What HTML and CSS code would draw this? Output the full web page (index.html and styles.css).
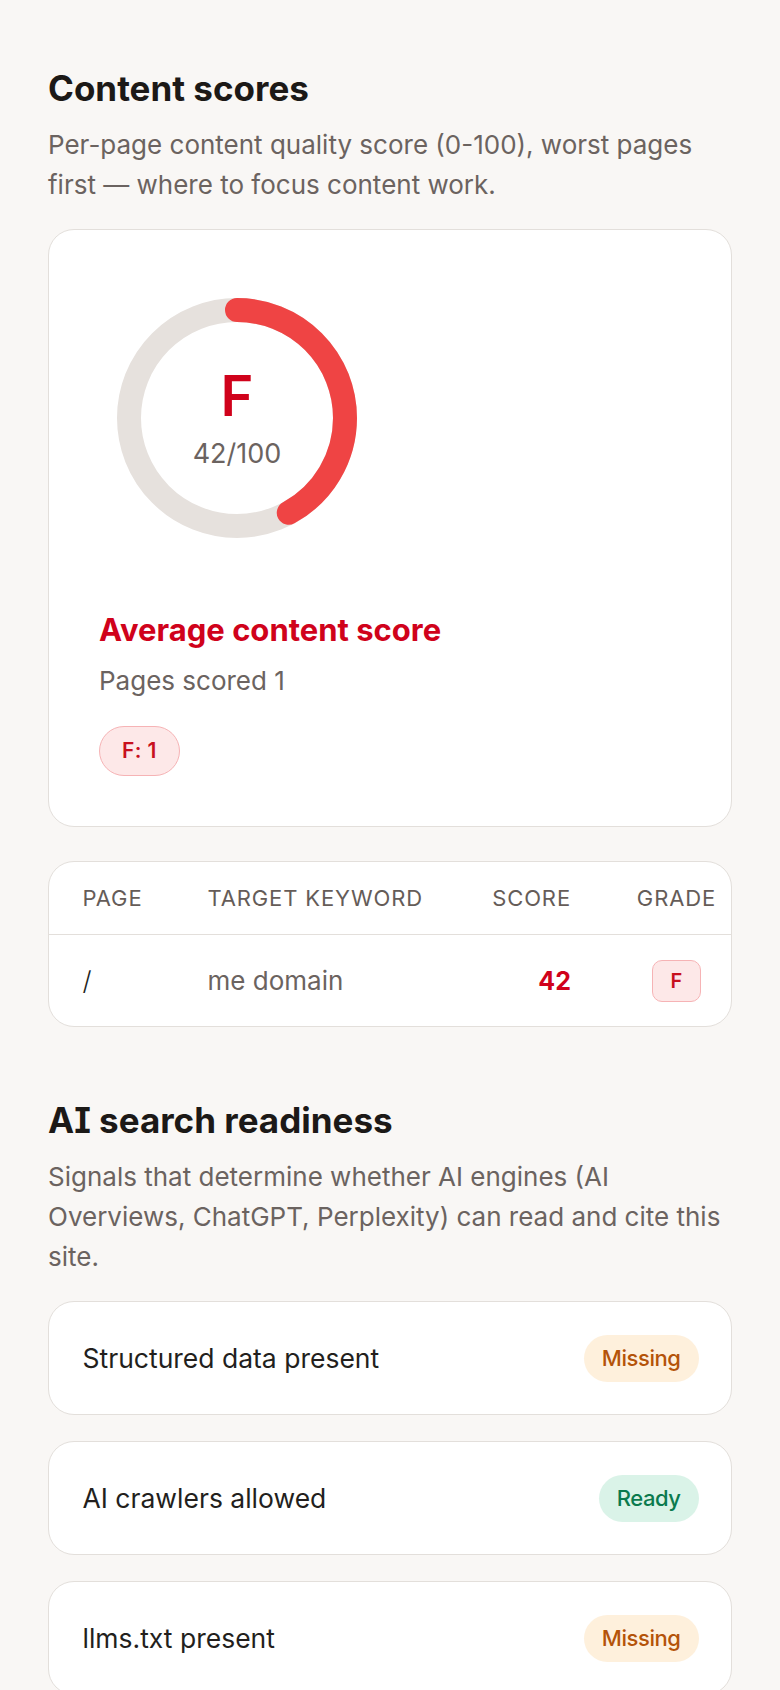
FILE: index.html
```html
<!DOCTYPE html>
<html lang="en">
<head>
<meta charset="utf-8">
<title>Content scores</title>
<link rel="stylesheet" href="styles.css">
</head>
<body>
<main class="page">
  <section class="section">
    <h2 class="section-title">Content scores</h2>
    <p class="section-desc">Per-page content quality score (0-100), worst pages first — where to focus content work.</p>

    <div class="card score-card">
      <div class="ring">
        <svg class="ring-svg" width="240" height="240" viewBox="0 0 240 240">
          <circle cx="120" cy="120" r="108" fill="none" stroke="#e6e1dd" stroke-width="24"/>
          <circle cx="120" cy="120" r="108" fill="none" stroke="#ef4444" stroke-width="24" stroke-linecap="round" stroke-dasharray="285 679" transform="rotate(-90 120 120)"/>
        </svg>
        <div class="ring-label">
          <div class="ring-grade">F</div>
          <div class="ring-score">42/100</div>
        </div>
      </div>
      <h3 class="avg-title">Average content score</h3>
      <p class="avg-sub">Pages scored 1</p>
      <div class="chips">
        <span class="chip chip-f">F: 1</span>
      </div>
    </div>

    <div class="card table-card">
      <div class="trow thead">
        <div class="cell">PAGE</div>
        <div class="cell">TARGET KEYWORD</div>
        <div class="cell cell-right">SCORE</div>
        <div class="cell cell-grade">GRADE</div>
      </div>
      <div class="trow tbody">
        <div class="cell cell-page">/</div>
        <div class="cell cell-kw">me domain</div>
        <div class="cell cell-right cell-score">42</div>
        <div class="cell cell-grade"><span class="grade-badge">F</span></div>
      </div>
    </div>
  </section>

  <section class="section section-ai">
    <h2 class="section-title">AI search readiness</h2>
    <p class="section-desc">Signals that determine whether AI engines (AI Overviews, ChatGPT, Perplexity) can read and cite this site.</p>

    <div class="signal-list">
      <div class="card signal">
        <span class="signal-name">Structured data present</span>
        <span class="status status-missing">Missing</span>
      </div>
      <div class="card signal">
        <span class="signal-name">AI crawlers allowed</span>
        <span class="status status-ready">Ready</span>
      </div>
      <div class="card signal">
        <span class="signal-name">llms.txt present</span>
        <span class="status status-missing">Missing</span>
      </div>
    </div>
  </section>
</main>
</body>
</html>
```

FILE: styles.css
```css
* {
  box-sizing: border-box;
}

html, body {
  margin: 0;
  padding: 0;
}

body {
  background: #f9f7f5;
  font-family: "Inter", "Liberation Sans", sans-serif;
  color: #231f1d;
}

.page {
  padding: 68px 48px 40px;
}

.section-title {
  margin: 0;
  font-size: 35px;
  line-height: 40px;
  font-weight: 700;
  letter-spacing: 0;
  color: #1c1917;
  font-feature-settings: "cv08" 1;
}

.section-desc {
  margin: 17px 0 24px;
  font-size: 26px;
  line-height: 40px;
  color: #6b6360;
}

.card {
  background: #ffffff;
  border: 1.5px solid #e3dfdb;
  border-radius: 26px;
}

/* score card */
.score-card {
  padding: 50px 50px 50px;
}

.ring {
  display: grid;
  width: 240px;
  height: 240px;
  margin: 18px 0 0 18px;
}

.ring-svg,
.ring-label {
  grid-area: 1 / 1;
}

.ring-label {
  align-self: center;
  justify-self: center;
  display: flex;
  flex-direction: column;
  align-items: center;
}

.ring-grade {
  font-size: 56px;
  line-height: 56px;
  font-weight: 600;
  color: #d0021b;
}

.ring-score {
  margin-top: 15px;
  font-size: 27px;
  line-height: 30px;
  color: #6b6360;
}

.avg-title {
  margin: 74px 0 0;
  font-size: 31px;
  line-height: 36px;
  font-weight: 700;
  letter-spacing: 0;
  color: #d0021b;
}

.avg-sub {
  margin: 14.5px 0 0;
  font-size: 26px;
  line-height: 36px;
  color: #6b6360;
}

.chips {
  display: flex;
  gap: 12px;
  margin-top: 27px;
}

.chip {
  display: inline-block;
  padding: 12px 22px;
  border-radius: 999px;
  font-size: 21px;
  line-height: 24px;
  font-weight: 600;
  letter-spacing: 0.02em;
}

.chip-f {
  background: #fde8e8;
  border: 1.5px solid #f6b3b5;
  color: #c8101e;
}

/* table */
.table-card {
  margin-top: 34px;
  overflow: hidden;
}

.trow {
  display: grid;
  grid-template-columns: 125px 1fr 80px 160px;
  align-items: center;
  padding-left: 33.5px;
}

.thead {
  height: 73.5px;
  border-bottom: 1.5px solid #e3dfdb;
}

.thead .cell {
  font-size: 22px;
  font-weight: 400;
  letter-spacing: 0.04em;
  color: #655c58;
}

.tbody {
  height: 91px;
}

.cell {
  white-space: nowrap;
}

.cell-right {
  text-align: right;
}

.cell-grade {
  padding-left: 51px;
  text-align: center;
}

.cell-page {
  font-size: 26px;
  font-weight: 300;
  color: #231f1d;
}

.cell-kw {
  font-size: 26px;
  color: #6b6360;
}

.cell-score {
  font-size: 25px;
  font-weight: 700;
  color: #d0021b;
}

.grade-badge {
  display: inline-flex;
  align-items: center;
  justify-content: center;
  width: 49px;
  height: 42px;
  border-radius: 10px;
  background: #fde8e8;
  border: 1.5px solid #f6b3b5;
  color: #c8101e;
  font-size: 20px;
  font-weight: 600;
}

/* AI readiness */
.section-ai {
  margin-top: 73px;
}

.signal-list {
  display: flex;
  flex-direction: column;
  gap: 26px;
}

.signal {
  display: flex;
  align-items: center;
  justify-content: space-between;
  height: 114px;
  padding: 0 32.5px 0 33.5px;
}

.signal-name {
  font-size: 26.5px;
  color: #231f1d;
}

.status {
  display: inline-flex;
  align-items: center;
  height: 47px;
  padding: 0 18px;
  border-radius: 999px;
  font-size: 22px;
  font-weight: 500;
  letter-spacing: -0.02em;
}

.status-missing {
  background: #fef0dc;
  color: #b45309;
}

.status-ready {
  background: #daf3e8;
  color: #0b7a4e;
}
```
